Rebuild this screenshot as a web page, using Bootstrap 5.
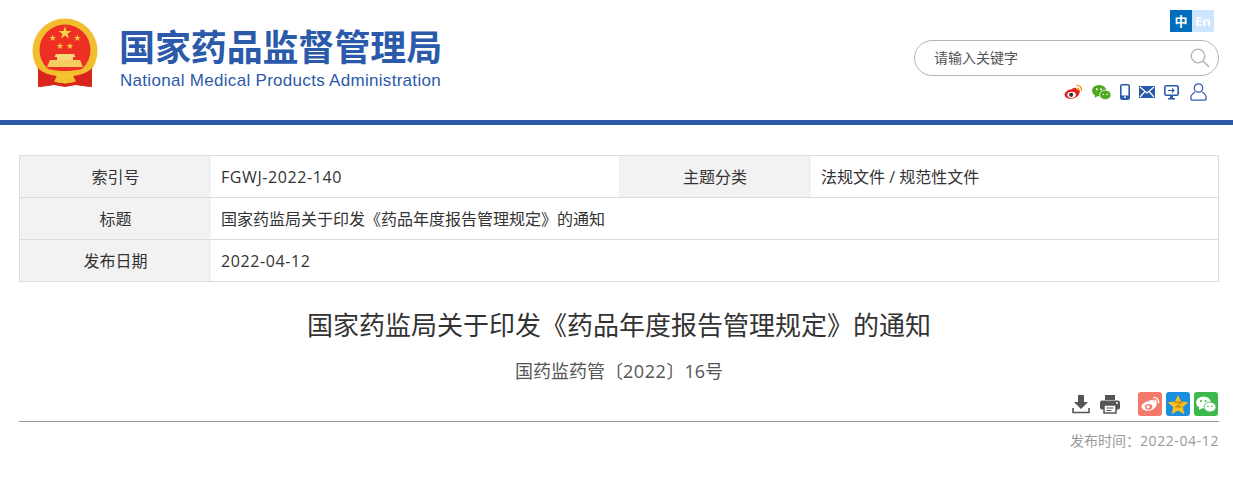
<!DOCTYPE html>
<html lang="zh-CN">
<head>
  <meta charset="UTF-8" />
  <meta name="viewport" content="width=device-width, initial-scale=1" />
  <title>国家药品监督管理局</title>
  <link href="https://cdn.jsdelivr.net/npm/bootstrap@5.3.0/dist/css/bootstrap.min.css" rel="stylesheet" />
  <style>
    body { font-family: "Open Sans", "Noto Sans CJK SC", sans-serif; color: #333; background: #fff; }
    .site-head { height: 125px; border-bottom: 5px solid #2b5aaa; padding: 10px 14px 0 32px; }
    .emblem { width: 66px; height: 70px; margin-top: 8px; }
    .brand { margin-left: 21px; margin-top: 10px; color: #2b5aaa; }
    .brand-cn { font-family: "Noto Sans CJK SC", sans-serif; font-size: 36px; font-weight: 700; line-height: 50px; letter-spacing: -.1px; white-space: nowrap; }
    .brand-en { font-family: "Liberation Sans", sans-serif; font-size: 17px; line-height: 20px; letter-spacing: .3px; white-space: nowrap; margin: 1px 0 0 1px; }
    .lang-sw { width: 44px; height: 22px; font-size: 13px; line-height: 22px; margin-right: 5px; }
    .lang-on { background: #006ebc; color: #fff; width: 22px; font-weight: 700; }
    .lang-off { background: #cce6ff; color: #fff; width: 22px; font-weight: 700; }
    .search-box { width: 305px; height: 36px; border: 1px solid #b5b5b5; border-radius: 18px; margin-top: 8px; padding: 0 8px 0 19px; font-size: 14px; color: #555; }
    .search-hint { margin-bottom: 2px; }
    .tool-row { margin-top: 6px; gap: 9px; height: 20px; margin-right: 12px; }
    .page-wrap { width: 1200px; margin: 30px 0 0 19px; }
    .meta-table { border: 1px solid #ddd; font-size: 16px; }
    .meta-row { height: 42px; border-bottom: 1px solid #ddd; }
    .meta-row:last-child { height: 41px; border-bottom: 0; }
    .meta-label { width: 191px; flex: none; background: #f2f2f2; }
    .meta-label-wide { width: 192px; }
    .meta-value { padding-left: 10px; }
    .meta-half { width: 408px; flex: none; }
    .num-text { letter-spacing: .6px; }
    .doc-title { font-size: 26px; line-height: 36px; font-weight: 400; margin: 25px 0 0; color: #333; }
    .doc-no { font-size: 18px; line-height: 26px; color: #555; margin-top: 15px; }
    .doc-tools { height: 26px; margin-top: 7px; padding-right: 1px; }
    .doc-rule { border-top: 1px solid #999; margin-top: 4px; }
    .doc-date { font-size: 14px; line-height: 20px; color: #999; margin-top: 9px; }
    .share-btn { width: 24px; height: 24px; border-radius: 3px; margin-left: 4px; }
    .tool-dl { margin-right: 10px; }
    .tool-print { margin-right: 14px; }
    .tool-user { margin-left: 2px; }
  </style>
</head>
<body>
  <header class="site-head d-flex justify-content-between">
    <div class="d-flex align-items-start">
      <svg class="emblem" viewBox="0 0 66 70">
        <defs><polygon id="star5" points="0,-1 .225,-.309 .951,-.309 .363,.118 .588,.809 0,.382 -.588,.809 -.363,.118 -.951,-.309 -.225,-.309"/></defs>
        <path d="M8 48 L8 69 L22 67 L33 69 L44 67 L58 69 L58 48 Z" fill="#d9251c"/>
        <circle cx="33" cy="33" r="32.500" fill="#f3bd30"/>
        <circle cx="33" cy="32" r="25.500" fill="#ee2f24"/>
        <use href="#star5" fill="#f9d648" transform="translate(33 15) scale(6.800)"/>
        <use href="#star5" fill="#f4ca3e" transform="translate(20.700 20) scale(3.600)"/>
        <use href="#star5" fill="#f4ca3e" transform="translate(45.300 20) scale(3.600)"/>
        <use href="#star5" fill="#f4ca3e" transform="translate(28 28) scale(3.600)"/>
        <use href="#star5" fill="#f4ca3e" transform="translate(38 28) scale(3.600)"/>
        <path d="M24 36h18l1.500 3H41v3H25v-3h-2.500z" fill="#f6d77a"/>
        <path d="M18 42h30l3 7H15z" fill="#f4cd63"/>
        <path d="M7 46c6 5 14 7 26 7s20-2 26-7l2 4c-6 6-16 8-28 8S11 56 5 50z" fill="#f3bd30"/>
        <path d="M6 50 L6 69 L20 67 L25 58 C17 57 11 55 6 50z M60 50 L60 69 L46 67 L41 58 C49 57 55 55 60 50z" fill="#d9251c"/>
        <path d="M23 55c4-1 7 1 10 1s6-2 10-1l-3 7-3.500-2-3.500 6-3.500-6-3.500 2z" fill="#f4c531"/>
      </svg>
      <div class="brand">
        <div class="brand-cn">国家药品监督管理局</div>
        <div class="brand-en">National Medical Products Administration</div>
      </div>
    </div>
    <div class="d-flex flex-column align-items-end">
      <div class="lang-sw d-flex text-center">
        <div class="lang-on">中</div>
        <div class="lang-off">En</div>
      </div>
      <div class="search-box d-flex align-items-center justify-content-between">
        <span class="search-hint">请输入关键字</span>
        <svg width="20" height="20" viewBox="0 0 20 20" fill="none" stroke="#b5b5b5" stroke-width="1.300"><circle cx="8" cy="8" r="6.800"/><path d="M13 13l6 6" stroke-width="1.600"/></svg>
      </div>
      <div class="tool-row d-flex align-items-center">
        <svg width="19" height="17" viewBox="0 0 20 18"><path d="M8 5.500c3-2.500 5.500-2 5.500.5 3-.5 4 2 2.500 4.500-1.500 3-5 5-9 5-4 0-6.500-2-6.500-4.500C.5 9 4 5.500 8 5.500z" fill="#e02020"/><ellipse cx="8" cy="11.500" rx="4.500" ry="3.300" fill="#fff"/><circle cx="7.500" cy="11.500" r="2.200" fill="#333"/><path d="M13 1.500c3.500-.5 6 2.500 5.500 6M13.500 4.500c1.500-.3 2.500 1 2.400 2.500" fill="none" stroke="#f3a01b" stroke-width="1.500"/></svg>
        <svg width="19" height="17" viewBox="0 0 20 17"><ellipse cx="7.500" cy="6.500" rx="7.500" ry="6" fill="#4fa81e"/><path d="M3 11l0 3 3.500-2z" fill="#4fa81e"/><ellipse cx="14" cy="11" rx="6" ry="5" fill="#4fa81e" stroke="#fff" stroke-width=".8"/><circle cx="5" cy="5" r="1" fill="#fff"/><circle cx="9.500" cy="5" r="1" fill="#fff"/><circle cx="12" cy="10.500" r=".8" fill="#fff"/><circle cx="16" cy="10.500" r=".8" fill="#fff"/></svg>
        <svg width="10" height="16" viewBox="0 0 10 16"><rect x=".8" y=".8" width="8.400" height="14.400" rx="1.500" fill="none" stroke="#2b5aaa" stroke-width="1.600"/><rect x="1" y="11.500" width="8" height="3.500" fill="#2b5aaa"/><circle cx="5" cy="13.200" r="1" fill="#fff"/></svg>
        <svg width="16" height="12" viewBox="0 0 16 12"><rect width="16" height="12" fill="#2b5aaa"/><path d="M1 1l7 6 7-6M1 11l5-5.500M15 11l-5-5.500" fill="none" stroke="#fff" stroke-width="1.200"/></svg>
        <svg width="15" height="15" viewBox="0 0 15 15"><rect x=".8" y=".8" width="13.400" height="9.400" rx="1.500" fill="none" stroke="#2b5aaa" stroke-width="1.600"/><path d="M4 5.500h6M8 3.500l2 2-2 2" fill="none" stroke="#2b5aaa" stroke-width="1.100"/><path d="M6 11h3v2h2v1.500H4V13h2z" fill="#2b5aaa"/></svg>
        <svg class="tool-user" width="17" height="18" viewBox="0 0 17 18" fill="none" stroke="#3a62ae" stroke-width="1.300"><circle cx="8.500" cy="5" r="4.200"/><path d="M5 9C2.500 10.500 .8 12.500.8 15c0 1.500 1 2.200 2.200 2.200h11c1.200 0 2.200-.7 2.200-2.200 0-2.500-1.700-4.500-4.200-6"/></svg>
      </div>
    </div>
  </header>

  <main class="page-wrap">
    <div class="meta-table">
      <div class="meta-row d-flex align-items-stretch">
        <div class="meta-label d-flex align-items-center justify-content-center">索引号</div>
        <div class="meta-value meta-half d-flex align-items-center"><span class="num-text">FGWJ-2022-140</span></div>
        <div class="meta-label meta-label-wide d-flex align-items-center justify-content-center">主题分类</div>
        <div class="meta-value d-flex align-items-center">法规文件 / 规范性文件</div>
      </div>
      <div class="meta-row d-flex align-items-stretch">
        <div class="meta-label d-flex align-items-center justify-content-center">标题</div>
        <div class="meta-value d-flex align-items-center">国家药监局关于印发《药品年度报告管理规定》的通知</div>
      </div>
      <div class="meta-row d-flex align-items-stretch">
        <div class="meta-label d-flex align-items-center justify-content-center">发布日期</div>
        <div class="meta-value d-flex align-items-center"><span class="num-text">2022-04-12</span></div>
      </div>
    </div>

    <h1 class="doc-title text-center">国家药监局关于印发《药品年度报告管理规定》的通知</h1>
    <div class="doc-no text-center">国药监药管〔<span class="num-text">2022</span>〕16号</div>

    <div class="doc-tools d-flex justify-content-end align-items-center">
      <svg class="tool-dl" width="18" height="20" viewBox="0 0 18 20"><path d="M6 1h6v7h4l-7 7-7-7h4z" fill="#555"/><path d="M1 14v4.500h16V14" fill="none" stroke="#555" stroke-width="1.600"/></svg>
      <svg class="tool-print" width="20" height="20" viewBox="0 0 20 20"><path d="M5 1h10v5H5z" fill="#555"/><rect y="6.500" width="20" height="9" rx="2" fill="#555"/><rect x="4" y="11" width="12" height="8" fill="#fff" stroke="#555" stroke-width="1.500"/><path d="M6.500 14h7M6.500 16.500h5" stroke="#555"/><circle cx="17" cy="9" r="1" fill="#fff"/></svg>
      <div class="share-btn d-flex align-items-center justify-content-center" style="background:#f4796a"><svg width="19" height="17" viewBox="0 0 20 18"><path d="M8 5.500c3-2.500 5.500-2 5.500.5 3-.5 4 2 2.500 4.500-1.500 3-5 5-9 5-4 0-6.500-2-6.500-4.500C.5 9 4 5.500 8 5.500z" fill="#fff"/><ellipse cx="8" cy="11.500" rx="4" ry="3" fill="#f4796a"/><circle cx="7.500" cy="11.500" r="1.800" fill="#fff"/><path d="M13 1.500c3.500-.5 6 2.500 5.500 6M13.500 4.500c1.500-.3 2.500 1 2.400 2.500" fill="none" stroke="#fff" stroke-width="1.400"/></svg></div>
      <div class="share-btn d-flex align-items-center justify-content-center" style="background:#1a8fe0"><svg width="22" height="21" viewBox="0 0 24 23"><path d="M12 1l3.200 7.300 8 .7-6 5.300 1.800 7.800-7-4.100-7 4.100 1.800-7.800-6-5.300 8-.7z" fill="#fbc21b"/><path d="M8 9h8l-6 5h6" fill="none" stroke="#c9861a" stroke-width="1.500"/></svg></div>
      <div class="share-btn d-flex align-items-center justify-content-center" style="background:#3cb94a"><svg width="20" height="17" viewBox="0 0 20 17"><ellipse cx="7.500" cy="6.500" rx="7.500" ry="6" fill="#fff"/><path d="M3 11l0 3 3.500-2z" fill="#fff"/><ellipse cx="14" cy="11" rx="6" ry="5" fill="#fff" stroke="#3cb94a" stroke-width=".8"/><circle cx="5" cy="5" r="1" fill="#3cb94a"/><circle cx="9.500" cy="5" r="1" fill="#3cb94a"/><circle cx="12" cy="10.500" r=".8" fill="#3cb94a"/><circle cx="16" cy="10.500" r=".8" fill="#3cb94a"/></svg></div>
    </div>
    <div class="doc-rule"></div>
    <div class="doc-date text-end">发布时间：<span class="num-text">2022-04-12</span></div>
  </main>

  <script src="https://cdn.jsdelivr.net/npm/bootstrap@5.3.0/dist/js/bootstrap.bundle.min.js"></script>
</body>
</html>
